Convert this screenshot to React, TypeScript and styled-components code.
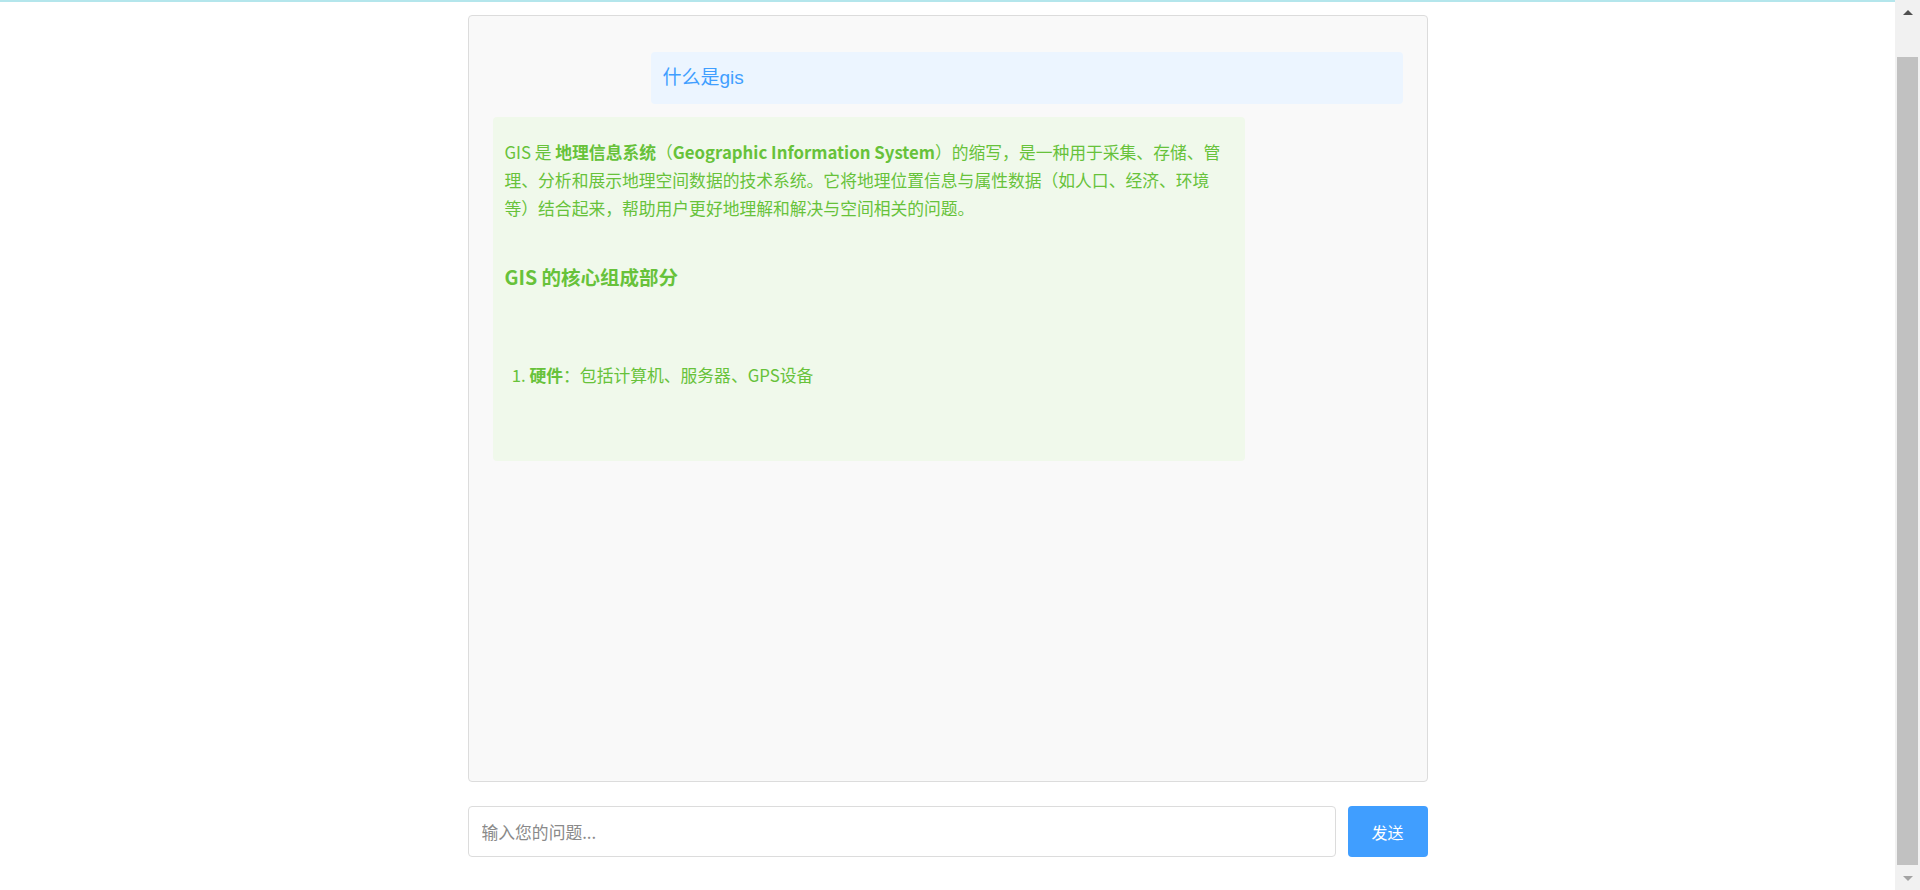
import React, { useLayoutEffect } from 'react';
import styled, { createGlobalStyle } from 'styled-components';

const GlobalStyle = createGlobalStyle`
  html, body {
    margin: 0;
    padding: 0;
    background: #ffffff;
  }
  body {
    font-family: "Liberation Sans", "Noto Sans CJK SC", sans-serif;
  }
`;

const Page = styled.div`
  box-sizing: border-box;
  padding-right: 25px;
`;

const TopBar = styled.header`
  height: 32px;
  background: #ffffff;
  border-bottom: 2px solid #b4e6ec;
`;

const Main = styled.main`
  width: 960px;
  margin: 0 auto;
  padding: 13px 0 33px;
`;

const ChatPanel = styled.section`
  box-sizing: border-box;
  height: 767px;
  padding: 24px;
  background: #f9f9f9;
  border: 1px solid #dcdcdc;
  border-radius: 4px;
  overflow-y: auto;
`;

const Bubble = styled.div<{ $user?: boolean }>`
  width: 80%;
  padding: 12px;
  margin: ${p => (p.$user ? '12px 0 12px auto' : '13px 0 12px')};
  border-radius: 4px;
  background: ${p => (p.$user ? '#ecf5ff' : '#f0f9eb')};
  color: ${p => (p.$user ? '#409eff' : '#67c23a')};
  font-size: ${p => (p.$user ? '19px' : '16.8px')};
  line-height: 28px;
  font-family: ${p =>
    p.$user
      ? '"Liberation Sans", "Noto Sans CJK SC", sans-serif'
      : '"Noto Sans CJK SC", sans-serif'};

  strong {
    font-weight: 700;
  }
`;

const Para = styled.p`
  margin: 9px 0 0;
`;

const Heading = styled.h3`
  margin: 41px 0 0;
  font-size: 19.5px;
  line-height: 28px;
  font-weight: 700;
`;

const List = styled.ol`
  margin: 70px 0 60px;
  padding-left: 25px;
`;

const InputRow = styled.div`
  display: flex;
  gap: 12px;
  height: 51px;
  margin-top: 24px;
`;

const QuestionInput = styled.input`
  flex: 1;
  box-sizing: border-box;
  padding: 0 13px;
  border: 1px solid #dcdcdc;
  border-radius: 4px;
  font-family: "Noto Sans CJK SC", sans-serif;
  font-size: 16.8px;
  color: #333;
  outline: none;

  &::placeholder {
    color: #8a8a8a;
  }
`;

const SendButton = styled.button`
  width: 80px;
  border: none;
  border-radius: 4px;
  background: #409eff;
  color: #ffffff;
  font-family: "Noto Sans CJK SC", sans-serif;
  font-size: 16px;
  cursor: pointer;
`;

/* window scrollbar, as it shows in the screenshot */
const ScrollBar = styled.div`
  position: fixed;
  top: 0;
  right: 0;
  bottom: 0;
  width: 25px;
  display: flex;
  flex-direction: column;
  background: #f1f1f1;
`;

const ScrollArrow = styled.div<{ $down?: boolean }>`
  height: 24px;
  display: flex;
  align-items: center;
  justify-content: center;

  &::before {
    content: '';
    width: 0;
    height: 0;
    border-left: 5px solid transparent;
    border-right: 5px solid transparent;
    ${p =>
      p.$down
        ? 'border-top: 5px solid #a3a3a3;'
        : 'border-bottom: 5px solid #505050;'}
  }
`;

const ScrollTrack = styled.div`
  flex: 1;
  display: flex;
  flex-direction: column;
  padding: 33px 2px 1px;
`;

const ScrollThumb = styled.div`
  flex: 1;
  background: #c1c1c1;
`;

export default function App() {
  useLayoutEffect(() => {
    window.scrollTo(0, document.documentElement.scrollHeight);
  }, []);

  return (
    <Page>
      <GlobalStyle />
      <TopBar />
      <Main>
        <ChatPanel>
          <Bubble $user>什么是gis</Bubble>
          <Bubble>
            <Para>
              GIS 是 <strong>地理信息系统</strong>（<strong>Geographic Information System</strong>）的缩写，是一种用于采集、存储、管理、分析和展示地理空间数据的技术系统。它将地理位置信息与属性数据（如人口、经济、环境等）结合起来，帮助用户更好地理解和解决与空间相关的问题。
            </Para>
            <Heading>GIS 的核心组成部分</Heading>
            <List>
              <li>
                <strong>硬件</strong>：包括计算机、服务器、GPS设备
              </li>
            </List>
          </Bubble>
        </ChatPanel>
        <InputRow>
          <QuestionInput placeholder="输入您的问题..." />
          <SendButton>发送</SendButton>
        </InputRow>
      </Main>
      <ScrollBar>
        <ScrollArrow />
        <ScrollTrack>
          <ScrollThumb />
        </ScrollTrack>
        <ScrollArrow $down />
      </ScrollBar>
    </Page>
  );
}
